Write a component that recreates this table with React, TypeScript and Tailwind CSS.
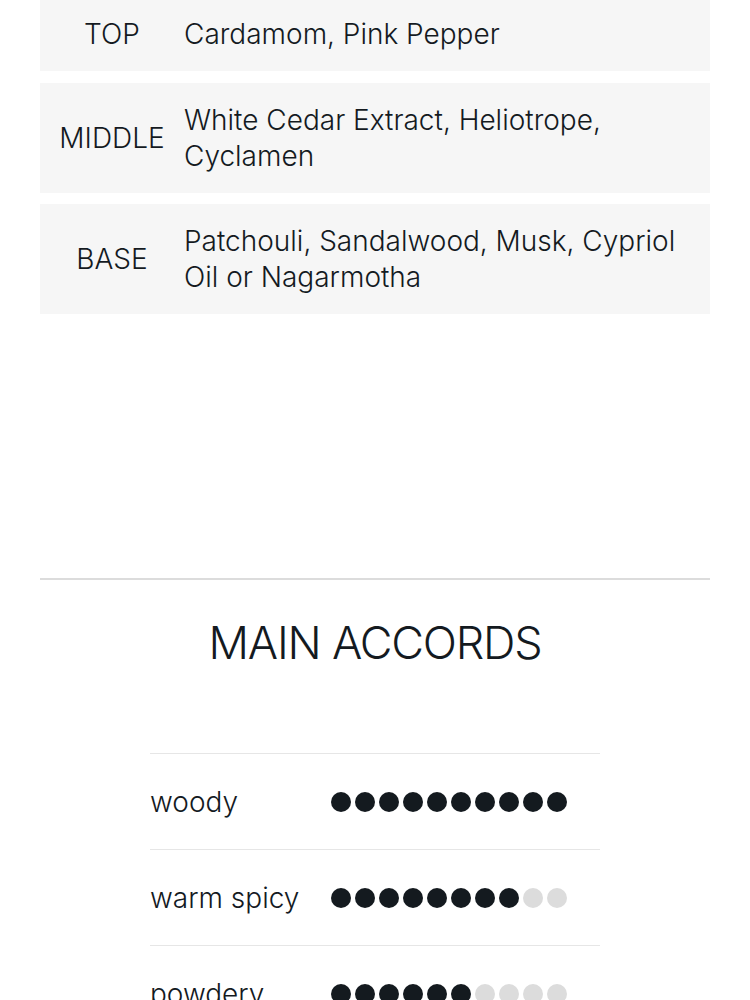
import React from "react";

const notes = [
  { label: "TOP", text: "Cardamom, Pink Pepper" },
  { label: "MIDDLE", text: "White Cedar Extract, Heliotrope, Cyclamen" },
  { label: "BASE", text: "Patchouli, Sandalwood, Musk, Cypriol Oil or Nagarmotha" },
];

const accords = [
  { name: "woody", level: 10 },
  { name: "warm spicy", level: 8 },
  { name: "powdery", level: 6 },
];

const App: React.FC = () => {
  return (
    <div className="min-h-screen bg-white px-10 font-['Inter',sans-serif] font-light text-[#141a1f]">
      {/* Notes pyramid */}
      <div className="-mt-[3px] flex flex-col gap-[11.5px]">
        {notes.map((n) => (
          <div key={n.label} className="flex items-center bg-[#f6f6f6] py-[19px]">
            <div className="w-[144px] shrink-0 text-center text-[28px] leading-9">{n.label}</div>
            <div className="pr-8 text-[28px] leading-9">{n.text}</div>
          </div>
        ))}
      </div>

      <div className="mt-[264px] h-[2px] bg-[#dcdcdc]" />

      {/* Main accords */}
      <h2 className="mt-[35px] text-center text-[45px] leading-[56px] tracking-[-1.2px]">MAIN ACCORDS</h2>

      <div className="mx-auto mt-[82px] w-[450px]">
        {accords.map((a) => (
          <div key={a.name} className="flex h-[96px] items-center border-t border-[#e6e6e6]">
            <div className="w-[181px] shrink-0 text-[28px] leading-9">{a.name}</div>
            <div className="flex gap-1">
              {Array.from({ length: 10 }).map((_, i) => (
                <span
                  key={i}
                  className={i < a.level ? "h-5 w-5 rounded-full bg-[#141a1f]" : "h-5 w-5 rounded-full bg-[#dcdcdc]"}
                />
              ))}
            </div>
          </div>
        ))}
      </div>
    </div>
  );
};

export default App;
